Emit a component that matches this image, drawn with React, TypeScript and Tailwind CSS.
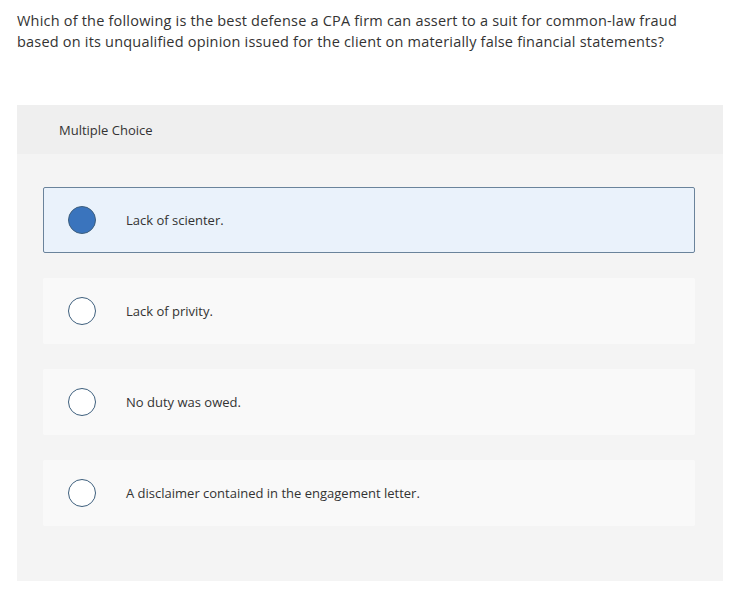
const options = [
  "Lack of scienter.",
  "Lack of privity.",
  "No duty was owed.",
  "A disclaimer contained in the engagement letter.",
];

export default function App() {
  const selected = 0;

  return (
    <div
      className="w-[731px] h-[592px] bg-white text-[#333333]"
      style={{ fontFamily: "'Open Sans', sans-serif" }}
    >
      <p className="pl-[17px] pt-[10px] text-[14.5px] leading-[21px] tracking-[0.2px] whitespace-nowrap">
        Which of the following is the best defense a CPA firm can assert to a suit for common-law fraud
        <br />
        based on its unqualified opinion issued for the client on materially false financial statements?
      </p>

      <div className="ml-[17px] mt-[53px] w-[706px] h-[476px] bg-[#f4f4f4]">
        <div className="h-[49px] bg-[#efefef] pl-[42px] pt-[2px] flex items-center text-[13px]">
          Multiple Choice
        </div>

        <div className="flex flex-col gap-[25px] pl-[26px] pt-[33px] w-[678px]">
          {options.map((opt, i) => (
            <div
              key={opt}
              className={`h-[66px] flex items-center rounded-[2px] ${
                i === selected
                  ? "bg-[#eaf2fb] border border-[#6a839b]"
                  : "bg-[#f9f9f9] border border-transparent"
              }`}
            >
              <span
                className={`ml-[24px] w-[28px] h-[28px] rounded-full border-[1.5px] border-[#3e5f7d] ${
                  i === selected ? "bg-[#3a74bd]" : "bg-white"
                }`}
              />
              <span className="ml-[30px] pt-[2px] text-[13px]">{opt}</span>
            </div>
          ))}
        </div>
      </div>
    </div>
  );
}
